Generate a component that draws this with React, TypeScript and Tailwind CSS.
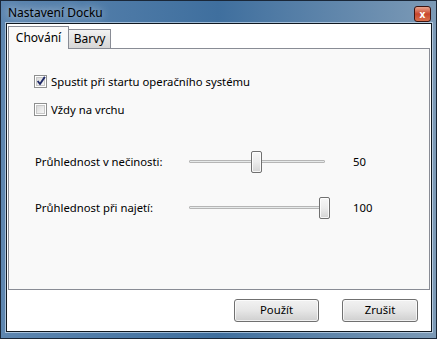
import React from 'react';

// Windows 7 style dialog "Nastavení Docku" with two tabs, checkboxes, sliders, buttons.

const font = { fontFamily: '"Segoe UI", "Noto Sans", "Open Sans", sans-serif' };

function CheckBox({ checked, label }: { checked?: boolean; label: string }) {
  return (
    <div className="flex h-[13px] items-center">
      <div className="flex h-[13px] w-[13px] items-center justify-center border border-[#8e8f8f] bg-white">
        <div className="relative h-[9px] w-[9px] border border-[#c7c7c7] bg-gradient-to-br from-[#dadada] to-[#f6f6f6]">
          {checked && (
            <svg viewBox="0 0 9 9" className="absolute left-[-1px] top-[-2px] h-[10px] w-[10px]">
              <path d="M1.5 4.5 L3.6 7.2 L8 0.8" fill="none" stroke="#202b68" strokeWidth="1.7" />
            </svg>
          )}
        </div>
      </div>
      <span className="ml-[4px] text-[11.3px] leading-none text-black">{label}</span>
    </div>
  );
}

function SliderRow({ label, value }: { label: string; value: number }) {
  return (
    <div className="flex h-[22px] items-center">
      <span className="w-[154px] text-[11.3px] text-black">{label}</span>
      <div className="relative h-[22px] w-[136px]">
        <div className="absolute left-0 right-0 top-[9px] h-[3px] rounded-[1px] border border-[#b6b6b6] bg-[#e7eaea]" />
        <div
          className="absolute top-0 h-[22px] w-[11px] rounded-[2px] border border-[#707070] bg-gradient-to-b from-[#f7f7f7] via-[#ececec] to-[#d4d4d4] shadow-[inset_0_0_0_1px_rgba(255,255,255,0.8)]"
          style={{ left: -6 + 1.36 * value }}
        />
      </div>
      <span className="ml-[28px] text-[11.3px] text-black">{value}</span>
    </div>
  );
}

function Button({ label, width }: { label: string; width: string }) {
  return (
    <div
      className={`flex h-[23px] ${width} items-center justify-center rounded-[3px] border border-[#707070] bg-gradient-to-b from-[#f2f2f2] via-[#e6e6e6] to-[#cfcfcf] text-[11.3px] text-black shadow-[inset_0_0_0_1px_rgba(255,255,255,0.7)]`}
    >
      {label}
    </div>
  );
}

export default function App() {
  return (
    <div style={font} className="h-[339px] w-[437px] bg-white">
      <div className="flex h-[339px] w-[437px] flex-col border border-[#1a2738] bg-gradient-to-r from-[#5d86b0] via-[#3f6f9e] to-[#7c9ab6] pb-[6px] pl-[5px] pr-[4px]">
        {/* title bar */}
        <div className="flex h-[22px] items-center justify-between">
          <span className="ml-[2px] mt-[2px] text-[12px] text-black [text-shadow:0_0_8px_rgba(255,255,255,0.9)]">
            Nastavení Docku
          </span>
          <div className="mr-[1px] mt-[3px] flex h-[16px] w-[17px] items-center justify-center rounded-[3px] border border-[#3c1410] bg-gradient-to-b from-[#e8a48e] via-[#c8452c] to-[#d8704c]">
            <span className="text-[10px] font-bold leading-none text-white">x</span>
          </div>
        </div>

        {/* client area */}
        <div className="flex flex-1 flex-col border border-[#101820] bg-white shadow-[0_0_0_1px_rgba(220,235,250,0.6)]">
          <div className="ml-[1px] mr-[1px] mt-[2px] flex flex-col">
            {/* tab headers */}
            <div className="flex h-[22px] items-end">
              <div className="relative z-10 mb-[-1px] flex h-[23px] w-[61px] items-center justify-center border border-b-0 border-[#898c95] bg-[#f9f9f9] pb-[1px] text-[12px] text-black">
                Chování
              </div>
              <div className="flex h-[19px] w-[42px] items-center justify-center border border-b-0 border-l-0 border-[#898c95] bg-gradient-to-b from-[#f2f2f2] to-[#d6d6d6] text-[12px] text-black">
                Barvy
              </div>
            </div>
            {/* tab panel */}
            <div className="flex h-[242px] flex-col border border-[#898c95] bg-[#f9f9f9] pl-[25px] pt-[26px]">
              <CheckBox checked label="Spustit při startu operačního systému" />
              <div className="mt-[15px]">
                <CheckBox label="Vždy na vrchu" />
              </div>
              <div className="ml-[1px] mt-[35px] flex flex-col gap-[24px]">
                <SliderRow label="Průhlednost v nečinosti:" value={50} />
                <SliderRow label="Průhlednost při najetí:" value={100} />
              </div>
            </div>
          </div>

          {/* buttons */}
          <div className="mr-[13px] mt-[9px] flex justify-end gap-[23px]">
            <Button label="Použít" width="w-[85px]" />
            <Button label="Zrušit" width="w-[76px]" />
          </div>
        </div>
      </div>
    </div>
  );
}
